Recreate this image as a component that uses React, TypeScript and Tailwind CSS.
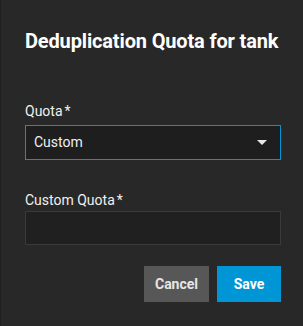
import React from "react";

export default function App() {
  return (
    <div
      className="w-[303px] h-[326px] bg-[#282828] border-l border-[#1f1f1f] text-[#f0f0f0] overflow-hidden"
      style={{ fontFamily: "Roboto, 'Noto Sans', sans-serif" }}
    >
      <div className="pl-6 pr-[22px] pt-[29px]">
        <h1 className="whitespace-nowrap text-[20px] leading-[24px] font-bold tracking-[-0.15px] text-white">
          Deduplication Quota for tank
        </h1>

        <div className="mt-[49px]">
          <label className="block text-[14px] leading-[18px]">
            Quota<span className="ml-[2px]">*</span>
          </label>
          <div className="mt-[5px] h-[35px] flex items-center justify-between border border-[#0095d5] bg-[#1e1e1e] pl-[8px] pr-[13px]">
            <span className="text-[14px]">Custom</span>
            <svg width="10" height="5" viewBox="0 0 10 5">
              <path d="M0 0 L10 0 L5 5 Z" fill="#e8e8e8" />
            </svg>
          </div>
        </div>

        <div className="mt-[31px]">
          <label className="block text-[14px] leading-[18px]">
            Custom Quota<span className="ml-[2px]">*</span>
          </label>
          <div className="mt-[2px] h-[34px] border border-[#3a3a3a] bg-[#202020]" />
        </div>

        <div className="mt-[21px] flex justify-end gap-2">
          <button className="w-[65px] h-[36px] bg-[#575757] text-[14px] font-bold text-[#e6e6e6]">
            Cancel
          </button>
          <button className="w-[64px] h-[36px] bg-[#0095d5] text-[14px] font-bold text-white">
            Save
          </button>
        </div>
      </div>
    </div>
  );
}
